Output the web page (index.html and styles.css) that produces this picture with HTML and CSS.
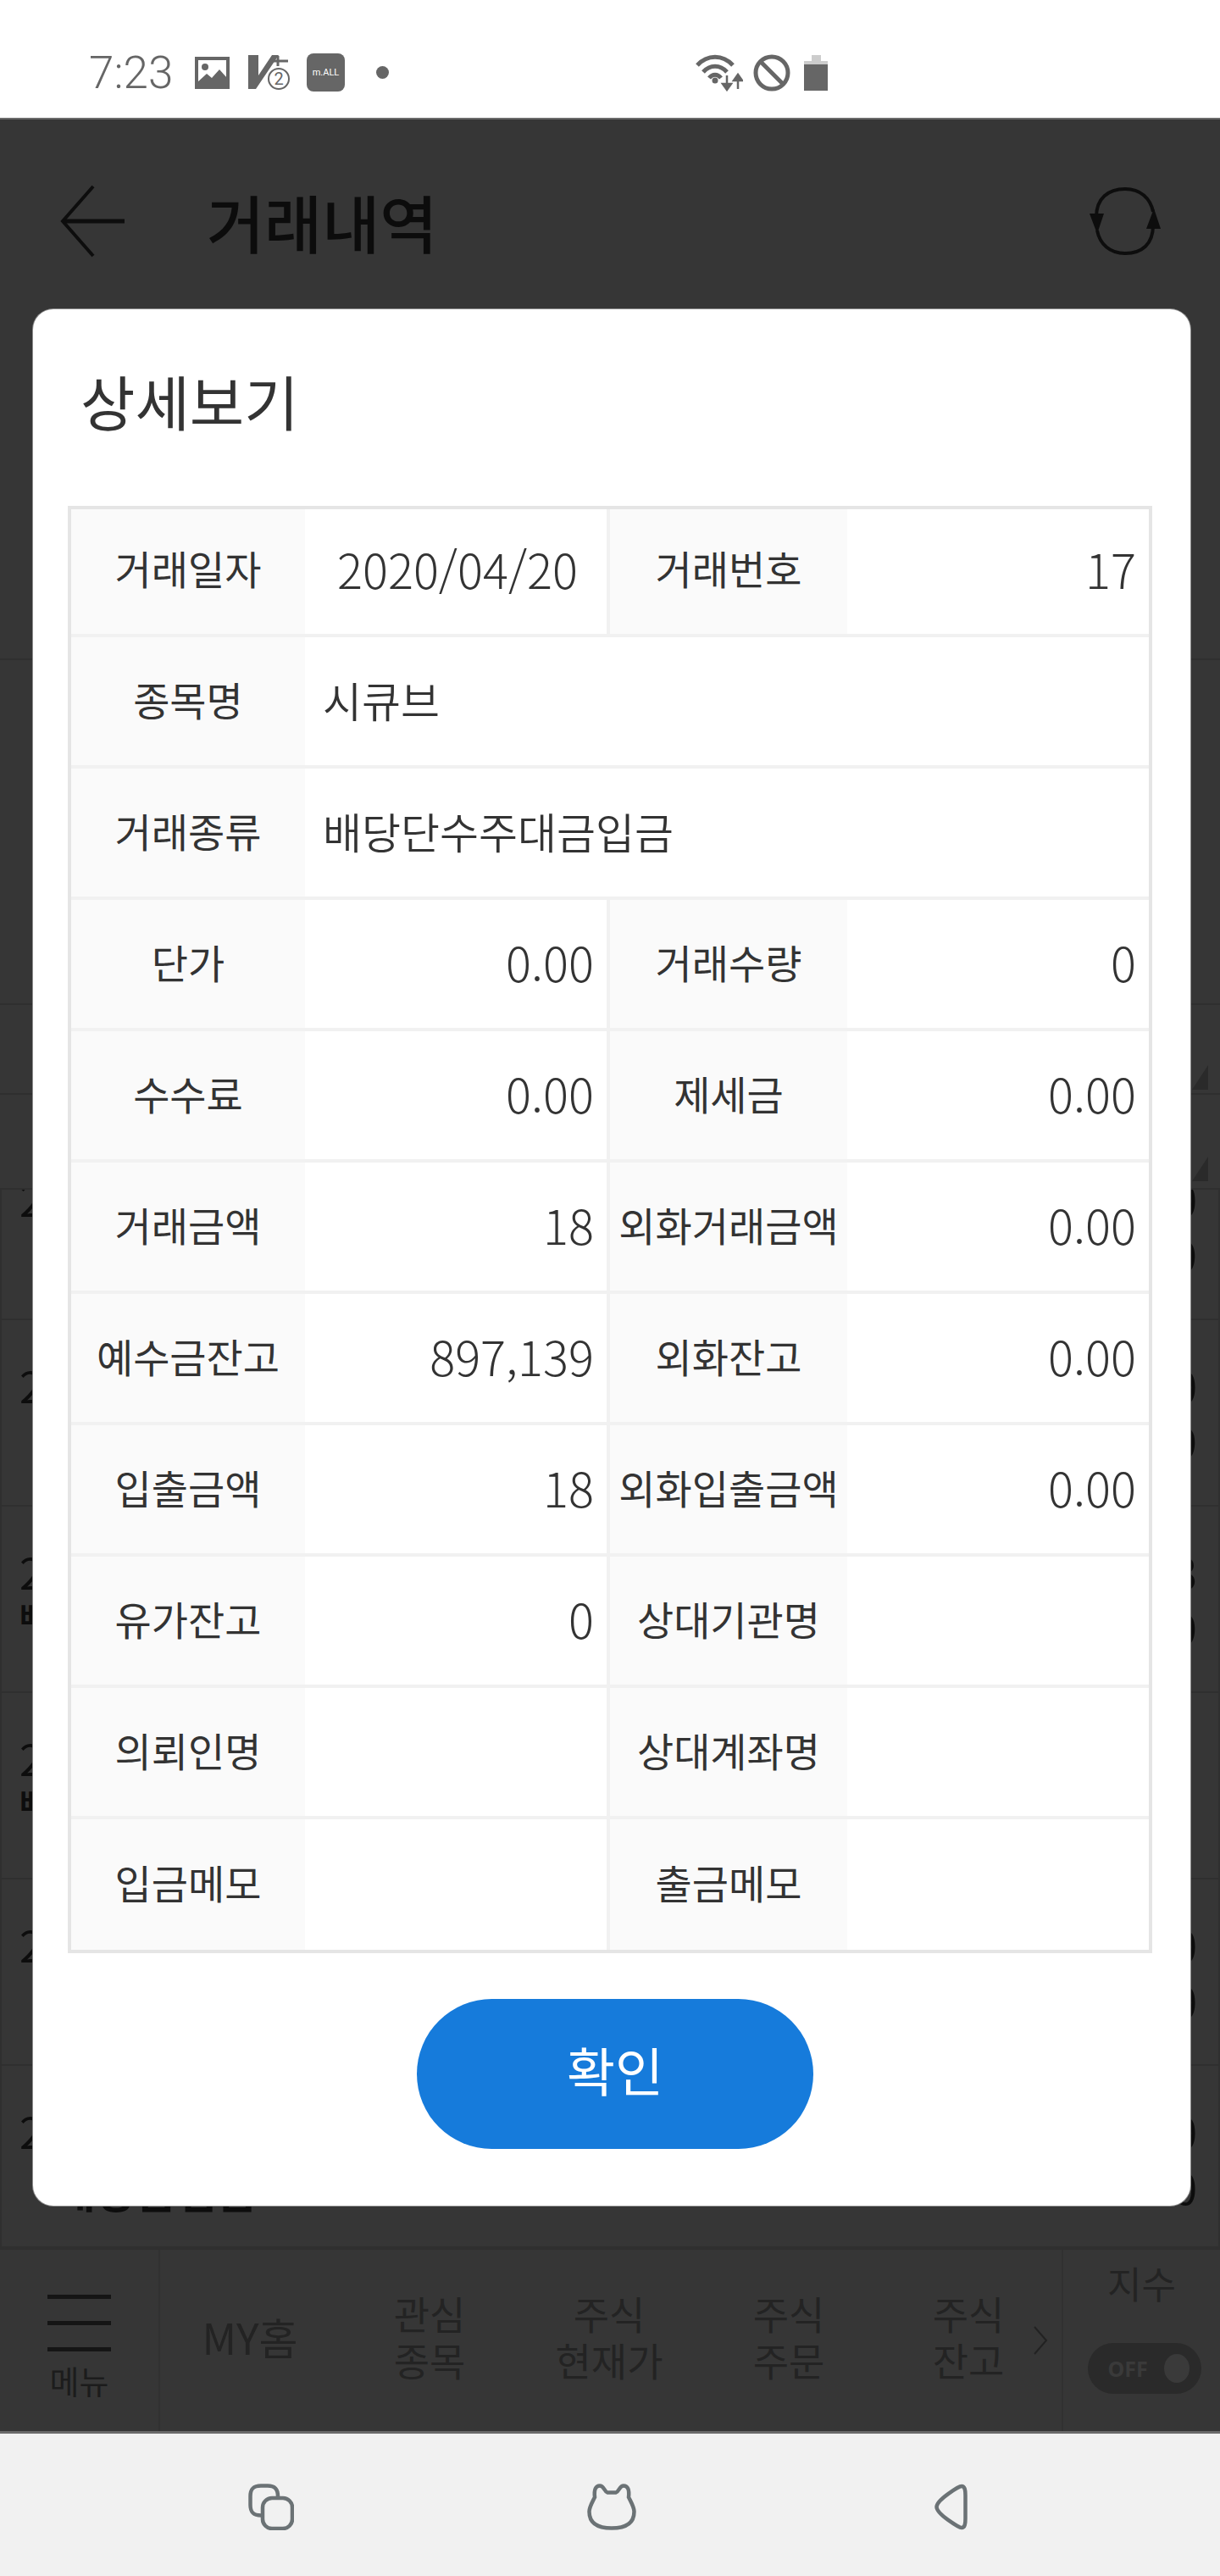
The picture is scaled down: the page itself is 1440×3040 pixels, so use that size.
FILE: index.html
```html
<!DOCTYPE html>
<html lang="ko">

<head>
    <meta charset="UTF-8">
    <meta name="viewport" content="width=device-width, initial-scale=1.0">
    <title>거래내역</title>
    <link rel="stylesheet" href="styles.css">
</head>

<body>
    <div class="screen">
        <div class="status-bar">
            <span class="clock">7:23</span>
            <svg class="icon-image" width="41" height="38" viewBox="0 0 41 38">
                <rect x="2" y="2" width="37" height="34" fill="none" stroke="#666" stroke-width="4" />
                <circle cx="12" cy="12" r="4" fill="#666" />
                <path d="M3 30 L14 20 L20 25 L29 15 L38 25 V36 H3 Z" fill="#666" />
            </svg>
            <svg class="icon-volte" width="49" height="42" viewBox="0 0 49 42">
                <path d="M0 0 H12 V24 L28 0 H36 L9 40 H0 Z" fill="#666" />
                <path d="M35 1 V13 M29 7 H47" stroke="#666" stroke-width="3" fill="none" />
                <circle cx="36" cy="28" r="12" fill="#fff" stroke="#666" stroke-width="2" />
                <text x="36" y="35" class="volte-num">2</text>
            </svg>
            <span class="app-badge">m.ALL</span>
            <span class="status-dot"></span>
            <svg class="icon-wifi" width="56" height="45" viewBox="0 0 56 45">
                <path d="M2 14 C14 1 32 1 44 14" fill="none" stroke="#666" stroke-width="5" />
                <path d="M9 22 C17 13 29 13 37 22" fill="none" stroke="#666" stroke-width="5" />
                <path d="M16 29 C20 24 26 24 30 29" fill="none" stroke="#666" stroke-width="5" />
                <circle cx="23" cy="32" r="3.5" fill="#666" />
                <path d="M37 26 V38 M32 36 L37 43 L42 36 Z" stroke="#666" stroke-width="2.5" fill="#666" />
                <path d="M50 42 V30 M45 32 L50 25 L55 32 Z" stroke="#666" stroke-width="2.5" fill="#666" />
            </svg>
            <svg class="icon-ban" width="44" height="44" viewBox="0 0 44 44">
                <circle cx="22" cy="22" r="19" fill="none" stroke="#666" stroke-width="5" />
                <path d="M9 9 L35 35" stroke="#666" stroke-width="5" />
            </svg>
            <svg class="icon-battery" width="28" height="42" viewBox="0 0 28 42">
                <path d="M9 0 H20 V7 H28 V11 H0 V7 H9 Z" fill="#ccc" />
                <rect x="0" y="11" width="28" height="31" fill="#666" />
            </svg>
        </div>

        <div class="app">
            <div class="app-header">
                <svg class="icon-back" width="78" height="86" viewBox="0 0 78 86">
                    <path d="M39 2 L3 43 L39 84" fill="none" stroke="#0d0d0d" stroke-width="4" />
                    <path d="M3 43 H76" stroke="#0d0d0d" stroke-width="5" />
                </svg>
                <h1 class="app-title">거래내역</h1>
                <svg class="icon-refresh" width="84" height="82" viewBox="0 0 84 82">
                    <path d="M8 36 C8 14 22 3 42 3 C60 3 72 14 75 30" fill="none" stroke="#0d0d0d" stroke-width="4" />
                    <path d="M75 46 C75 68 62 79 42 79 C24 79 12 68 9 52" fill="none" stroke="#0d0d0d" stroke-width="4" />
                    <path d="M0 32 H17 L9 56 Z" fill="#0d0d0d" />
                    <path d="M67 50 H84 L76 26 Z" fill="#0d0d0d" />
                </svg>
            </div>
            <div class="summary"></div>

            <div class="head-row"><span class="sort-mark"></span></div>
            <div class="head-row head-row-tall"><span class="sort-mark"></span></div>

            <div class="list">
                <div class="row row-first">
                    <div class="row-left"><span>2020/04/21</span><span class="row-name indent">배당금입금</span></div>
                    <div class="row-nums"><span>0</span><span>9</span></div>
                </div>
                <div class="row">
                    <div class="row-left"><span>2020/04/21</span><span class="row-name indent">배당금입금</span></div>
                    <div class="row-nums"><span>0</span><span>9</span></div>
                </div>
                <div class="row">
                    <div class="row-left"><span>2020/04/20</span><span class="row-name">배당단수주대금입금</span></div>
                    <div class="row-nums"><span>3</span><span>9</span></div>
                </div>
                <div class="row">
                    <div class="row-left"><span>2020/04/20</span><span class="row-name">배당단수주대금입금</span></div>
                    <div class="row-nums"></div>
                </div>
                <div class="row">
                    <div class="row-left"><span>2020/04/17</span><span class="row-name indent">배당금입금</span></div>
                    <div class="row-nums"><span>0</span><span>0</span></div>
                </div>
                <div class="row">
                    <div class="row-left"><span>2020/04/17</span><span class="row-name indent low">배당금입금</span></div>
                    <div class="row-nums"><span>0</span><span>0</span></div>
                </div>
            </div>

            <div class="tab-bar">
                <div class="tab-menu">
                    <span class="menu-bar"></span>
                    <span class="menu-bar"></span>
                    <span class="menu-bar"></span>
                    <span class="menu-label">메뉴</span>
                </div>
                <div class="tab-items">
                    <div class="tab-item tab-item-home">MY홈</div>
                    <div class="tab-item">관심<br>종목</div>
                    <div class="tab-item">주식<br>현재가</div>
                    <div class="tab-item">주식<br>주문</div>
                    <div class="tab-item">주식<br>잔고</div>
                    <svg class="icon-chevron" width="18" height="34" viewBox="0 0 18 34">
                        <path d="M2 1 L16 17 L2 33" fill="none" stroke="#222" stroke-width="2" />
                    </svg>
                </div>
                <div class="tab-index">
                    <span class="index-label">지수</span>
                    <div class="toggle">
                        <span class="toggle-text">OFF</span>
                        <span class="toggle-knob"></span>
                    </div>
                </div>
            </div>
        </div>

        <div class="nav-bar">
            <svg width="54" height="55" viewBox="0 0 54 55">
                <path d="M35 15 C35 6 31 2.5 23 2.5 H15 C6 2.5 2.5 6 2.5 15 V25 C2.5 34 6 37.5 15 37.5" fill="none" stroke="#6b7275" stroke-width="4.5" />
                <rect x="17" y="17" width="35" height="36" rx="11" fill="none" stroke="#6b7275" stroke-width="4.5" />
            </svg>
            <svg width="58" height="55" viewBox="0 0 58 55">
                <path d="M9 16 C8 7 10 2.5 15 2.5 C20 2.5 20 9 24 10.5 H34 C38 9 38 2.5 43 2.5 C48 2.5 50 7 49 16 C53 24 55.5 28 55.5 33 C55.5 46 47 52.5 29 52.5 C11 52.5 2.5 46 2.5 33 C2.5 28 5 24 9 16 Z" fill="none" stroke="#6b7275" stroke-width="4.5" />
            </svg>
            <svg width="39" height="55" viewBox="0 0 39 55">
                <path d="M32 3 C36 3 36.5 8 36.5 14 V41 C36.5 47 36 52 32 52 C29 52 2.5 36 2.5 27.5 C2.5 19 29 3 32 3 Z" fill="none" stroke="#6b7275" stroke-width="4.5" />
            </svg>
        </div>

        <div class="modal">
            <h2 class="modal-title">상세보기</h2>
            <table class="detail">
                <colgroup>
                    <col class="col-label-a">
                    <col class="col-value-a">
                    <col class="col-label-b">
                    <col class="col-value-b">
                </colgroup>
                <tr>
                    <th>거래일자</th>
                    <td class="mid-col center">2020/04/20</td>
                    <th>거래번호</th>
                    <td>17</td>
                </tr>
                <tr>
                    <th>종목명</th>
                    <td class="text" colspan="3">시큐브</td>
                </tr>
                <tr>
                    <th>거래종류</th>
                    <td class="text" colspan="3">배당단수주대금입금</td>
                </tr>
                <tr>
                    <th>단가</th>
                    <td class="mid-col">0.00</td>
                    <th>거래수량</th>
                    <td>0</td>
                </tr>
                <tr>
                    <th>수수료</th>
                    <td class="mid-col">0.00</td>
                    <th>제세금</th>
                    <td>0.00</td>
                </tr>
                <tr>
                    <th>거래금액</th>
                    <td class="mid-col">18</td>
                    <th>외화거래금액</th>
                    <td>0.00</td>
                </tr>
                <tr>
                    <th>예수금잔고</th>
                    <td class="mid-col">897,139</td>
                    <th>외화잔고</th>
                    <td>0.00</td>
                </tr>
                <tr>
                    <th>입출금액</th>
                    <td class="mid-col">18</td>
                    <th>외화입출금액</th>
                    <td>0.00</td>
                </tr>
                <tr>
                    <th>유가잔고</th>
                    <td class="mid-col">0</td>
                    <th>상대기관명</th>
                    <td></td>
                </tr>
                <tr>
                    <th>의뢰인명</th>
                    <td class="mid-col"></td>
                    <th>상대계좌명</th>
                    <td></td>
                </tr>
                <tr class="last-row">
                    <th>입금메모</th>
                    <td class="mid-col"></td>
                    <th>출금메모</th>
                    <td></td>
                </tr>
            </table>
            <button class="confirm">확인</button>
        </div>
    </div>
</body>

</html>
```

FILE: styles.css
```css
* {
    box-sizing: border-box;
}

body {
    margin: 0;
    font-family: "Noto Sans CJK KR", "Noto Sans", sans-serif;
    background-color: #363636;
}

.screen {
    position: relative;
    display: flex;
    flex-direction: column;
    width: 1440px;
    height: 3040px;
    overflow: hidden;
}

/* status bar */
.status-bar {
    display: flex;
    align-items: center;
    flex: 0 0 139px;
    padding: 32px 0 0 105px;
    background-color: white;
}

.clock {
    width: 125px;
    font-family: Roboto, sans-serif;
    font-size: 53px;
    font-weight: 300;
    color: #666;
}

.icon-volte {
    margin-left: 22px;
}

.volte-num {
    font-family: Roboto, sans-serif;
    font-size: 20px;
    fill: #666;
    text-anchor: middle;
}

.app-badge {
    display: flex;
    align-items: center;
    justify-content: center;
    width: 45px;
    height: 45px;
    margin-left: 20px;
    border-radius: 8px;
    background-color: #666;
    font-family: Roboto, sans-serif;
    font-size: 11px;
    color: white;
}

.status-dot {
    width: 15px;
    height: 15px;
    margin-left: 37px;
    border-radius: 50%;
    background-color: #666;
}

.icon-wifi {
    margin-left: 362px;
}

.icon-ban {
    margin-left: 12px;
}

.icon-battery {
    margin-left: 16px;
}

/* dimmed page behind the dialog */
.app {
    display: flex;
    flex-direction: column;
    flex: 0 0 2733px;
    min-height: 0;
    border-top: 2px solid #6a6a6a;
    border-bottom: 3px solid #6a6a6a;
    background-color: #363636;
}

.app-header {
    display: flex;
    align-items: center;
    flex: 0 0 240px;
    padding: 0 70px 0 71px;
}

.app-title {
    flex: 1;
    margin: 0 0 0 95px;
    font-size: 74px;
    font-weight: 500;
    line-height: 1.2;
    color: #0c0c0c;
}

.summary {
    flex: 0 0 398px;
    border-bottom: 2px solid #2f2f2f;
    margin-bottom: 405px;
}

.head-row {
    display: flex;
    align-items: flex-end;
    justify-content: flex-end;
    flex: 0 0 106px;
    padding: 0 14px 4px 0;
    border-top: 2px solid #2f2f2f;
}

.head-row-tall {
    flex-basis: 112px;
    padding-bottom: 8px;
}

.sort-mark {
    width: 19px;
    height: 29px;
    background-color: #2a2a2a;
    clip-path: polygon(100% 0, 100% 100%, 0 100%);
}

.list {
    flex: 1;
    min-height: 0;
    overflow: hidden;
    border-top: 2px solid #2f2f2f;
    border-left: 2px solid #2f2f2f;
    border-right: 2px solid #2f2f2f;
}

.row {
    display: flex;
    justify-content: space-between;
    height: 220px;
    padding: 43px 25px 0 21px;
    border-bottom: 2px solid #2f2f2f;
    font-size: 50px;
    color: #0d0d0d;
}

.row-first {
    margin-top: -66px;
}

.row-left {
    display: flex;
    flex-direction: column;
    margin-top: 7px;
    line-height: 52px;
}

.row-name {
    font-size: 36px;
    font-weight: 700;
}

.indent {
    padding-left: 57px;
}

.low {
    margin-top: 18px;
    padding-left: 42px;
    font-size: 52px;
}

.row-nums {
    display: flex;
    flex-direction: column;
    align-items: flex-end;
    line-height: 66px;
}

/* bottom tabs, also dimmed */
.tab-bar {
    display: flex;
    flex: 0 0 218px;
    border-top: 4px solid #2f2f2f;
    color: #232323;
}

.tab-menu {
    display: flex;
    flex-direction: column;
    align-items: center;
    width: 189px;
    padding-top: 53px;
    border-right: 2px solid #313131;
}

.menu-bar {
    width: 75px;
    height: 5px;
    margin-bottom: 26px;
    background-color: #151515;
}

.menu-label {
    margin-top: -12px;
    font-size: 38px;
    line-height: 40px;
    color: #1c1c1c;
}

.tab-items {
    position: relative;
    display: flex;
    width: 1064px;
}

.tab-item {
    display: flex;
    align-items: center;
    justify-content: center;
    width: 212px;
    padding-bottom: 10px;
    font-size: 46px;
    line-height: 55px;
    text-align: center;
    color: #232323;
}

.tab-item-home {
    font-size: 50px;
}

.icon-chevron {
    position: absolute;
    top: 90px;
    left: 1030px;
}

.tab-index {
    display: flex;
    flex-direction: column;
    align-items: center;
    flex: 1;
    padding-top: 9px;
    border-left: 2px solid #313131;
}

.index-label {
    font-size: 44px;
    line-height: 60px;
    color: #232323;
}

.toggle {
    display: flex;
    align-items: center;
    justify-content: space-between;
    width: 134px;
    height: 60px;
    margin-top: 41px;
    margin-left: 6px;
    padding: 0 14px 0 24px;
    border-radius: 30px;
    background-color: #2a2a2a;
}

.toggle-text {
    font-family: "Noto Sans", sans-serif;
    font-size: 25px;
    font-weight: 700;
    color: #3a3a3a;
}

.toggle-knob {
    width: 30px;
    height: 34px;
    border-radius: 50%;
    background-color: #3a3a3a;
}

/* navigation bar */
.nav-bar {
    display: flex;
    align-items: flex-start;
    flex: 1;
    gap: 346px;
    padding: 59px 0 0 293px;
    background-color: #f1f1f1;
}

.nav-bar svg + svg + svg {
    margin-left: 6px;
}

/* dialog */
.modal {
    position: absolute;
    top: 365px;
    left: 39px;
    width: 1366px;
    height: 2238px;
    padding: 58px 45px 0 41px;
    border-radius: 24px;
    background-color: white;
    box-shadow: 0 0 0 1px #8c8c8c;
}

.modal-title {
    height: 100px;
    margin: 0 0 74px 15px;
    font-size: 70px;
    font-weight: 400;
    line-height: 100px;
    color: #333;
}

.detail {
    width: 1280px;
    table-layout: fixed;
    border-collapse: separate;
    border-spacing: 0;
    border: 4px solid #e5e5e5;
}

.col-label-a {
    width: 276px;
}

.col-value-a {
    width: 360px;
}

.col-label-b {
    width: 280px;
}

.col-value-b {
    width: 356px;
}

.detail th,
.detail td {
    height: 155px;
    padding: 0 15px 5px;
    border-bottom: 4px solid #f1f1f1;
    line-height: 1.2;
    color: #333;
}

.detail tr:first-child th,
.detail tr:first-child td {
    height: 151px;
    padding-bottom: 8px;
}

.detail th {
    padding: 0 0 5px;
    background-color: #fafafa;
    font-size: 47px;
    font-weight: 400;
    text-align: center;
}

.detail td {
    font-size: 56px;
    font-weight: 300;
    text-align: right;
}

.detail .mid-col {
    border-right: 4px solid #f1f1f1;
}

.detail .center {
    padding-right: 15px;
    padding-left: 19px;
    text-align: center;
}

.detail .text {
    padding-left: 21px;
    font-size: 50px;
    font-weight: 350;
    text-align: left;
}

.detail .last-row th,
.detail .last-row td {
    height: 154px;
    border-bottom: none;
}

.confirm {
    display: block;
    width: 468px;
    height: 177px;
    margin: 54px 0 0 412px;
    padding: 0 0 12px;
    border: none;
    border-radius: 89px;
    background-color: #167bdb;
    font-family: inherit;
    font-size: 62px;
    color: white;
}
```
